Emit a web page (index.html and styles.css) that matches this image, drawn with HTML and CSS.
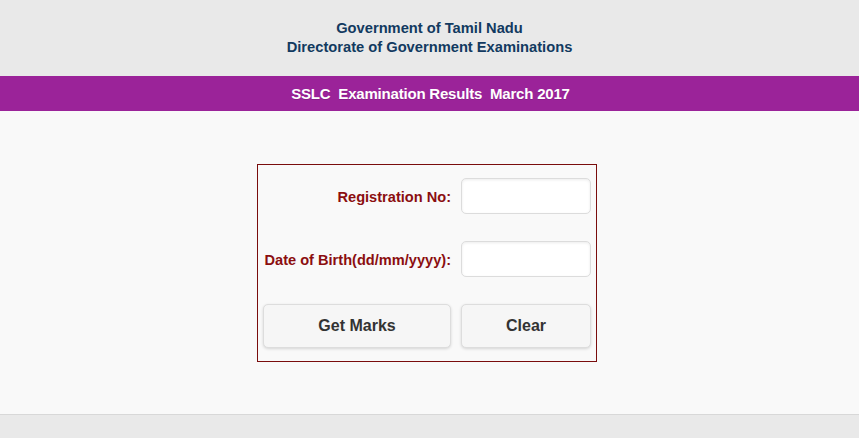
FILE: index.html
```html
<!DOCTYPE html>
<html lang="en">
<head>
<meta charset="utf-8">
<title>SSLC Examination Results March 2017</title>
<link rel="stylesheet" href="styles.css">
</head>
<body>
<header class="top">
  <div class="gov">Government of Tamil Nadu</div>
  <div class="gov">Directorate of Government Examinations</div>
</header>
<div class="bar">SSLC&nbsp; Examination Results&nbsp; March 2017</div>
<main class="content">
  <form class="box">
    <label class="lbl" for="reg">Registration No:</label>
    <input class="field" id="reg" type="text">
    <label class="lbl" for="dob">Date of Birth(dd/mm/yyyy):</label>
    <input class="field" id="dob" type="text">
    <button class="btn" type="button">Get Marks</button>
    <button class="btn" type="reset">Clear</button>
  </form>
</main>
<footer class="foot"></footer>
</body>
</html>
```
FILE: styles.css
```css
html, body {
  margin: 0;
  padding: 0;
}
body {
  font-family: "Liberation Sans", Arial, sans-serif;
  background: #f9f9f9;
  width: 859px;
  height: 438px;
  overflow: hidden;
}
.top {
  height: 76px;
  background: #e9e9e9;
  display: flex;
  flex-direction: column;
  align-items: center;
  justify-content: flex-start;
  padding-top: 19px;
  box-sizing: border-box;
}
.gov {
  color: #123a60;
  font-weight: bold;
  font-size: 14.7px;
  line-height: 19px;
}
.bar {
  height: 35px;
  background: #9b2399;
  color: #ffffff;
  font-weight: bold;
  font-size: 15px;
  letter-spacing: -0.2px;
  display: flex;
  align-items: center;
  justify-content: center;
  padding-left: 2px;
  text-shadow: 0 1px 0 rgba(0,0,0,0.15);
}
.content {
  height: 303px;
  background: #f9f9f9;
  padding-top: 53px;
  box-sizing: border-box;
}
.box {
  margin: 0 0 0 257px;
  width: 340px;
  box-sizing: border-box;
  border: 1px solid #7a0d0d;
  padding: 13px 5px 13px 5px;
  display: grid;
  grid-template-columns: 188px 130px;
  column-gap: 10px;
  grid-template-rows: 36px 36px 44px;
  row-gap: 27px;
}
.lbl {
  color: #8b0e10;
  font-weight: bold;
  font-size: 14.6px;
  text-align: right;
  align-self: center;
  padding-top: 1px;
  white-space: nowrap;
}
.field {
  margin: 0;
  width: 130px;
  height: 36px;
  box-sizing: border-box;
  background: #ffffff;
  border: 1px solid #dcdcdc;
  border-radius: 5px;
  box-shadow: inset 0 1px 3px rgba(0,0,0,0.08);
  font-family: inherit;
  font-size: 15px;
  padding: 0 6px;
}
.btn {
  margin: 0;
  height: 44px;
  box-sizing: border-box;
  background: #f6f6f6;
  border: 1px solid #dddddd;
  border-radius: 5px;
  box-shadow: 0 1px 3px rgba(0,0,0,0.15);
  color: #333333;
  font-family: inherit;
  font-weight: bold;
  font-size: 16px;
  text-shadow: 0 1px 0 #f3f3f3;
}
.foot {
  height: 24px;
  background: #e9e9e9;
  border-top: 1px solid #d8d8d8;
  box-sizing: border-box;
}
```
